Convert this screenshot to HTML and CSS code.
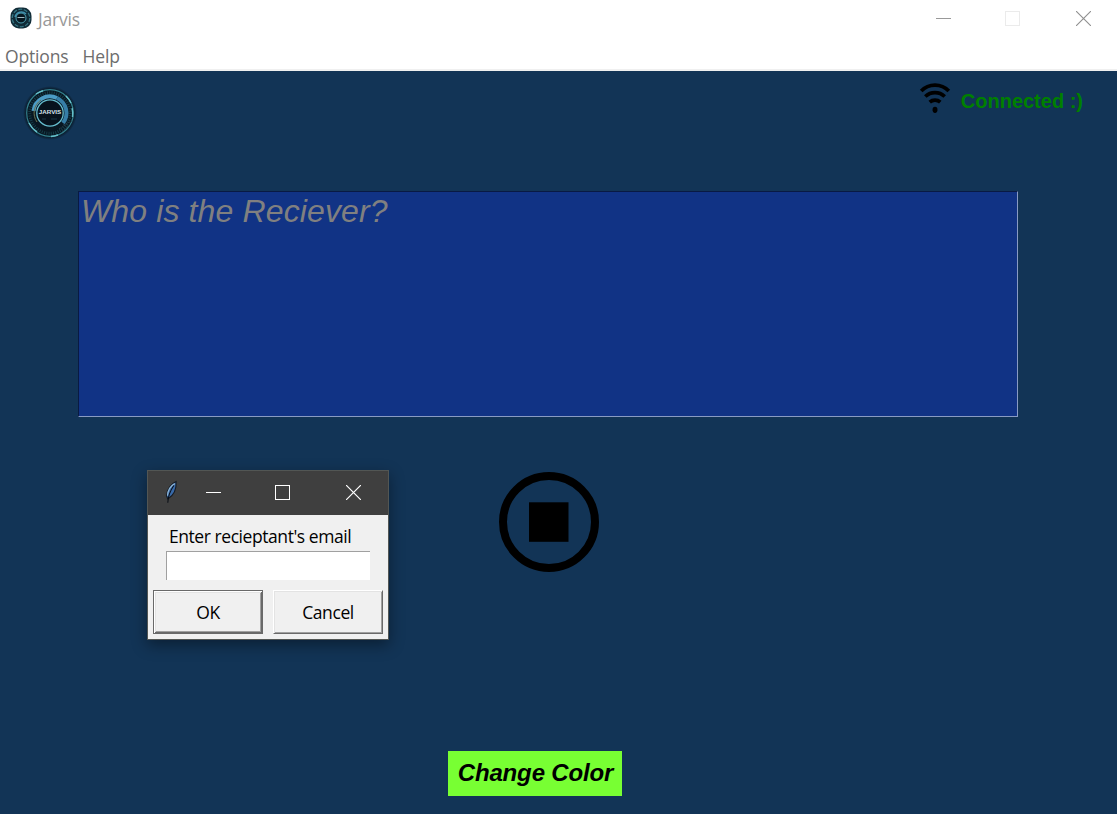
FILE: index.html
```html
<!DOCTYPE html>
<html lang="en">
<head>
<meta charset="utf-8">
<title>Jarvis</title>
<link rel="stylesheet" href="styles.css">
</head>
<body>
<svg class="defs" aria-hidden="true">
  <radialGradient id="rim"><stop offset=".86" stop-color="#081722"/><stop offset="1" stop-color="#081722" stop-opacity="0"/></radialGradient>
  <symbol id="reactor" viewBox="0 0 54 54">
    <circle cx="27" cy="27" r="27" fill="url(#rim)"/>
    <circle cx="27" cy="27" r="23.300" fill="none" stroke="#327f8d" stroke-width="1.200"/>
    <path d="M13 8A23.500 23.500 0 0 1 20 4.700M43 10A23.500 23.500 0 0 1 48 17M49 22A23 23 0 0 1 49.500 31M35 49A23.500 23.500 0 0 1 28 50.500M14 46A23.500 23.500 0 0 1 6 37" fill="none" stroke="#66bfc9" stroke-width="1.500"/>
    <circle cx="27" cy="27" r="20.300" fill="none" stroke="#163d48" stroke-width="3" stroke-dasharray="1 1.300"/>
    <path d="M10.500 25A16.500 16.500 0 0 1 34 12" fill="none" stroke="#4b9bc5" stroke-width="4"/>
    <path d="M34 12A16.500 16.500 0 0 1 40 37" fill="none" stroke="#367ea7" stroke-width="4"/>
    <path d="M14 36A15.500 15.500 0 0 1 18 14" fill="none" stroke="#6c7450" stroke-width="1"/>
    <circle cx="27" cy="27" r="13.200" fill="#07121d" stroke="#66bdce" stroke-width="1.300"/>
    <path d="M19 33h4M28 33h6" stroke="#254d60" stroke-width=".6"/>
    <path d="M36 43l8-5M39 46l8-8M40 39l9-4" stroke="#263b48" stroke-width="1" stroke-dasharray="2 1"/>
  </symbol>
</svg>
<header class="titlebar">
  <svg class="app-icon" viewBox="0 0 22 22">
    <rect x=".5" y=".5" width="21" height="21" rx="8.500" fill="#102b37"/>
    <circle cx="11" cy="11" r="8.800" fill="none" stroke="#357482" stroke-width="1.300" stroke-dasharray="4 1.500"/>
    <path d="M5 10A6.500 6.500 0 0 1 16 7" fill="none" stroke="#3f8eac" stroke-width="1.500"/>
    <circle cx="11" cy="11" r="5" fill="#071720" stroke="#4b9eb1"/>
    <path d="M7.500 10.500h7" stroke="#9fb9c1"/>
  </svg>
  <span class="app-name">Jarvis</span>
  <div class="window-controls">
    <svg viewBox="0 0 15 15"><path d="M0 7.500h15" stroke="#999"/></svg>
    <svg viewBox="0 0 15 15"><rect x=".5" y=".5" width="14" height="14" fill="none" stroke="#ebebeb"/></svg>
    <svg viewBox="0 0 15 15"><path d="M0 0l15 15M15 0L0 15" stroke="#8f8f8f" stroke-width="1.100"/></svg>
  </div>
</header>
<nav class="menubar"><span class="menu-options">Options</span><span class="menu-help">Help</span></nav>
<main class="app">
  <div class="status-row">
    <div class="logo"><svg viewBox="0 0 54 54"><use href="#reactor"/><text class="logo-text" x="27" y="28" text-anchor="middle" textLength="22.500" lengthAdjust="spacingAndGlyphs">JARVIS</text></svg></div>
    <div class="connection">
      <svg class="wifi" viewBox="0 0 30 30"><g fill="none" stroke="#000" stroke-width="3.700"><path d="M1.200 8.100A19 19 0 0 1 28.800 8.100"/><path d="M5.300 13.500A14 14 0 0 1 24.700 13.500"/><path d="M9.700 19.200A8 8 0 0 1 20.300 19.200"/></g><ellipse cx="15" cy="26.800" rx="2.500" ry="3.100"/></svg>
      <span class="connected">Connected :)</span>
    </div>
  </div>
  <div class="prompt"><span>Who is the Reciever?</span></div>
  <svg class="stop" viewBox="0 0 100 100"><circle cx="50" cy="50" r="46" fill="none" stroke="#000" stroke-width="8"/><rect x="30" y="30.300" width="39.500" height="39.500"/></svg>
  <button class="change">Change Color</button>
</main>
<section class="dialog">
  <div class="dialog-bar">
    <svg class="feather" viewBox="0 0 14 24"><path d="M12 .7C6.500 3 2 9 1.600 16L3 19.500C9 16 12.500 9 12 .7Z" fill="#3869a8" stroke="#161b22" stroke-width="1.200"/><path d="M10.500 3C6 5.500 3 10 2.700 16" fill="none" stroke="#8eb6d8" stroke-width="1.300"/><path d="M9.500 5C6 10 3.300 16 3 23.500" fill="none" stroke="#080d15" stroke-width="1.100"/></svg>
    <svg class="minimize" viewBox="0 0 15 15"><path d="M0 7.500h15" stroke="#fff"/></svg>
    <svg class="maximize" viewBox="0 0 15 15"><rect x=".5" y=".5" width="14" height="14" fill="none" stroke="#fff"/></svg>
    <svg class="close" viewBox="0 0 15 15"><path d="M0 0l15 15M15 0L0 15" stroke="#fff" stroke-width="1.200"/></svg>
  </div>
  <div class="dialog-body">
    <label class="email-label" for="email">Enter recieptant's email</label>
    <input class="email" id="email" type="text">
    <div class="actions"><button class="ok"><span>OK</span></button><button class="cancel"><span>Cancel</span></button></div>
  </div>
</section>
</body>
</html>
```
FILE: styles.css
```css
* { box-sizing: border-box; }
body { margin: 0; width: 1117px; height: 814px; overflow: hidden; background: #fff; font-family: "Open Sans", "Noto Sans", sans-serif; font-size: 17.5px; display: flex; flex-direction: column; }
svg { display: block; flex: none; }
.defs { position: absolute; width: 0; height: 0; }
.titlebar { height: 42px; flex: none; display: flex; padding: 7px 26px 0 10px; color: #999; }
.app-icon { width: 22px; height: 22px; }
.app-name { margin-left: 6px; line-height: 25px; letter-spacing: -.2px; }
.window-controls { margin-left: auto; padding-top: 4px; display: flex; gap: 54px; }
.window-controls svg { width: 15px; height: 15px; }
.window-controls svg:last-child { margin-left: 2px; }
.menubar { height: 29px; flex: none; display: flex; gap: 14px; padding-left: 5px; line-height: 29px; letter-spacing: -.15px; color: #6d6d6d; border-bottom: 2px solid #f0f0f0; }
.app { height: 743px; background: #123456; display: flex; flex-direction: column; }
.status-row { height: 120px; flex: none; display: flex; justify-content: space-between; padding: 12px 34px 0 23px; }
.logo { padding-top: 3px; }
.logo svg { width: 54px; height: 54px; }
.logo-text { font: bold 4.500px "Liberation Sans", Arial, sans-serif; fill: #d7e4eb; }
.connection { display: flex; gap: 11px; }
.wifi { width: 30px; height: 30px; overflow: visible; }
.connected { font: bold 20px/36px "Liberation Sans", Arial, sans-serif; color: #008000; }
.prompt { width: 940px; height: 226px; flex: none; margin-left: 78px; padding: 0 2px; background: #113385; border: 1px solid; border-color: #091a43 #899bc3 #899bc3 #091a43; font: italic 32px/38px "Liberation Sans", Arial, sans-serif; letter-spacing: .13px; color: #808080; }
.stop { width: 100px; height: 100px; margin: 55px 0 0 499px; }
.change { width: 174px; height: 45px; margin: 179px 0 0 448px; padding: 0 0 2px 1px; border: 0; background: #78ff33; color: #000; font: italic bold 24px/43px "Liberation Sans", Arial, sans-serif; letter-spacing: -.15px; white-space: nowrap; }
.dialog { position: absolute; left: 147px; top: 470px; width: 242px; height: 170px; border: 1px solid #525654; background: #f0f0f0; box-shadow: 0 5px 14px rgba(0,0,0,.4); color: #000; }
.dialog-bar { height: 44px; background: #3f3f3f; display: flex; align-items: center; padding: 0 0 2px 17px; }
.feather { width: 13px; height: 24px; }
.minimize, .maximize, .close { width: 15px; height: 15px; }
.minimize { margin-left: 28px; }
.maximize { margin-left: 54px; }
.close { margin-left: 56px; }
.dialog-body { height: 124px; padding: 8px 5px 5px; display: flex; flex-direction: column; }
.email-label { height: 28px; line-height: 26px; margin-left: 16px; white-space: nowrap; letter-spacing: -.44px; }
.email { width: 204px; height: 29px; margin-left: 13px; border: 0; border-top: 1px solid #a0a0a0; border-left: 1px solid #a0a0a0; background: #fff; padding: 0; outline: 0; }
.actions { display: flex; gap: 10px; margin-top: 10px; }
.actions button { width: 110px; height: 44px; padding: 0; font-family: inherit; font-size: 17.5px; letter-spacing: -.4px; background: #f0f0f0; color: #000; border: 1px solid; }
.actions .ok { border-color: #696969; box-shadow: inset 1px 1px #fff, inset -1px -1px #696969, inset 2px 2px #e3e3e3, inset -2px -2px #a0a0a0; }
.actions .cancel { border-color: #fff #696969 #696969 #fff; box-shadow: inset 1px 1px #e3e3e3, inset -1px -1px #a0a0a0; }
```
